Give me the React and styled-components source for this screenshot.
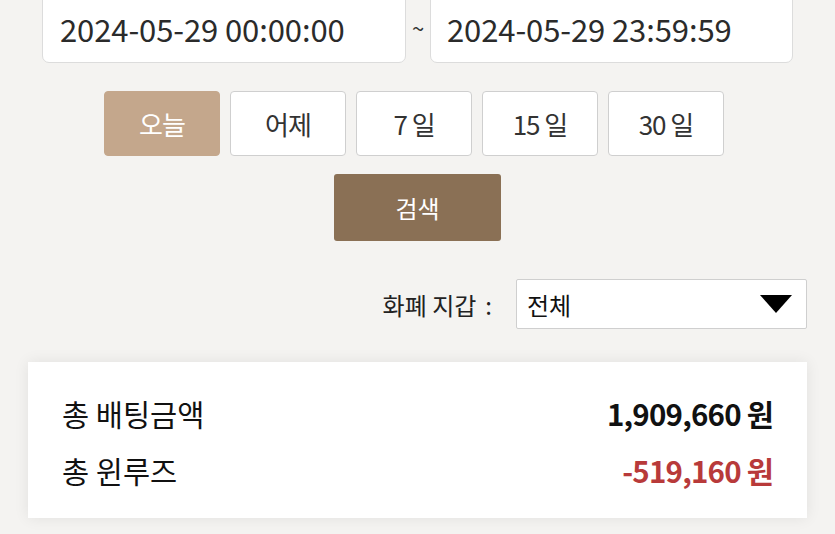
import styled, { createGlobalStyle } from "styled-components";

const Global = createGlobalStyle`
  html, body {
    margin: 0;
    padding: 0;
    background: #f4f3f1;
    font-family: "Noto Sans CJK KR", "Noto Sans", sans-serif;
    overflow: hidden;
  }
`;

const Page = styled.main`
  width: 835px;
  height: 534px;
  display: flex;
  flex-direction: column;
  box-sizing: border-box;
`;

const DateRow = styled.div`
  display: flex;
  align-items: center;
  padding: 0 42px;
  margin-top: -7px;
`;

const DateBox = styled.div`
  flex: 1;
  height: 70px;
  box-sizing: border-box;
  background: #fff;
  border: 1px solid #dcdcdc;
  border-radius: 7px;
  display: flex;
  align-items: center;
  padding-left: ${({ $pad }) => $pad}px;
  font-size: 31px;
  color: #2b2b2b;
  letter-spacing: -0.1px;
`;

const Tilde = styled.span`
  width: 24px;
  text-align: center;
  font-size: 22px;
  color: #333;
  padding-bottom: 2px;
`;

const QuickRow = styled.div`
  display: flex;
  gap: 10px;
  padding-left: 104px;
  margin-top: 28px;
`;

const QuickButton = styled.button`
  width: 116px;
  height: 65px;
  box-sizing: border-box;
  border-radius: 4px;
  border: 1px solid ${({ $active }) => ($active ? "#c4a78c" : "#cfcfcf")};
  background: ${({ $active }) => ($active ? "#c4a78c" : "#fff")};
  color: ${({ $active }) => ($active ? "#fff" : "#333")};
  font-family: inherit;
  font-size: 26px;
  letter-spacing: -1px;
  padding: 0;
`;

const SearchButton = styled.button`
  align-self: center;
  width: 167px;
  height: 67px;
  margin-top: 18px;
  border: none;
  border-radius: 3px;
  background: #8a7055;
  color: #fff;
  font-family: inherit;
  font-size: 24px;
  padding: 0;
`;

const FilterRow = styled.div`
  display: flex;
  justify-content: flex-end;
  align-items: center;
  gap: 24px;
  padding-right: 28px;
  margin-top: 38px;
`;

const FilterLabel = styled.span`
  font-size: 24px;
  color: #222;
`;

const Colon = styled.span`
  margin-left: 9px;
`;

const Select = styled.div`
  width: 291px;
  height: 50px;
  box-sizing: border-box;
  background: #fff;
  border: 1px solid #cfcfcf;
  border-radius: 2px;
  display: flex;
  align-items: center;
  justify-content: space-between;
  padding: 0 14px 0 10px;
  font-size: 24px;
  color: #111;
`;

const Card = styled.section`
  margin: 33px 28px 0;
  background: #fff;
  box-shadow: 0 0 14px rgba(0, 0, 0, 0.08);
  padding: 28px 34px 25px;
  display: flex;
  flex-direction: column;
  gap: 11px;
`;

const SummaryRow = styled.div`
  display: flex;
  justify-content: space-between;
  align-items: center;
  height: 46px;
  font-size: 29.5px;
  color: #111;
`;

const Value = styled.span`
  font-weight: 700;
  letter-spacing: -0.8px;
  color: ${({ $neg }) => ($neg ? "#b83a3a" : "#111")};
`;

const ranges = ["오늘", "어제", "7 일", "15 일", "30 일"];

export default function App() {
  return (
    <Page>
      <Global />
      <DateRow>
        <DateBox $pad={17}>2024-05-29 00:00:00</DateBox>
        <Tilde>~</Tilde>
        <DateBox $pad={16}>2024-05-29 23:59:59</DateBox>
      </DateRow>
      <QuickRow>
        {ranges.map((r, i) => (
          <QuickButton key={r} $active={i === 0}>
            {r}
          </QuickButton>
        ))}
      </QuickRow>
      <SearchButton>검색</SearchButton>
      <FilterRow>
        <FilterLabel>
          화폐 지갑<Colon>:</Colon>
        </FilterLabel>
        <Select>
          <span>전체</span>
          <svg width="32" height="18" viewBox="0 0 32 18">
            <polygon points="0,0 32,0 16,18" fill="#000" />
          </svg>
        </Select>
      </FilterRow>
      <Card>
        <SummaryRow>
          <span>총 배팅금액</span>
          <Value>1,909,660 원</Value>
        </SummaryRow>
        <SummaryRow>
          <span>총 윈루즈</span>
          <Value $neg>-519,160 원</Value>
        </SummaryRow>
      </Card>
    </Page>
  );
}
